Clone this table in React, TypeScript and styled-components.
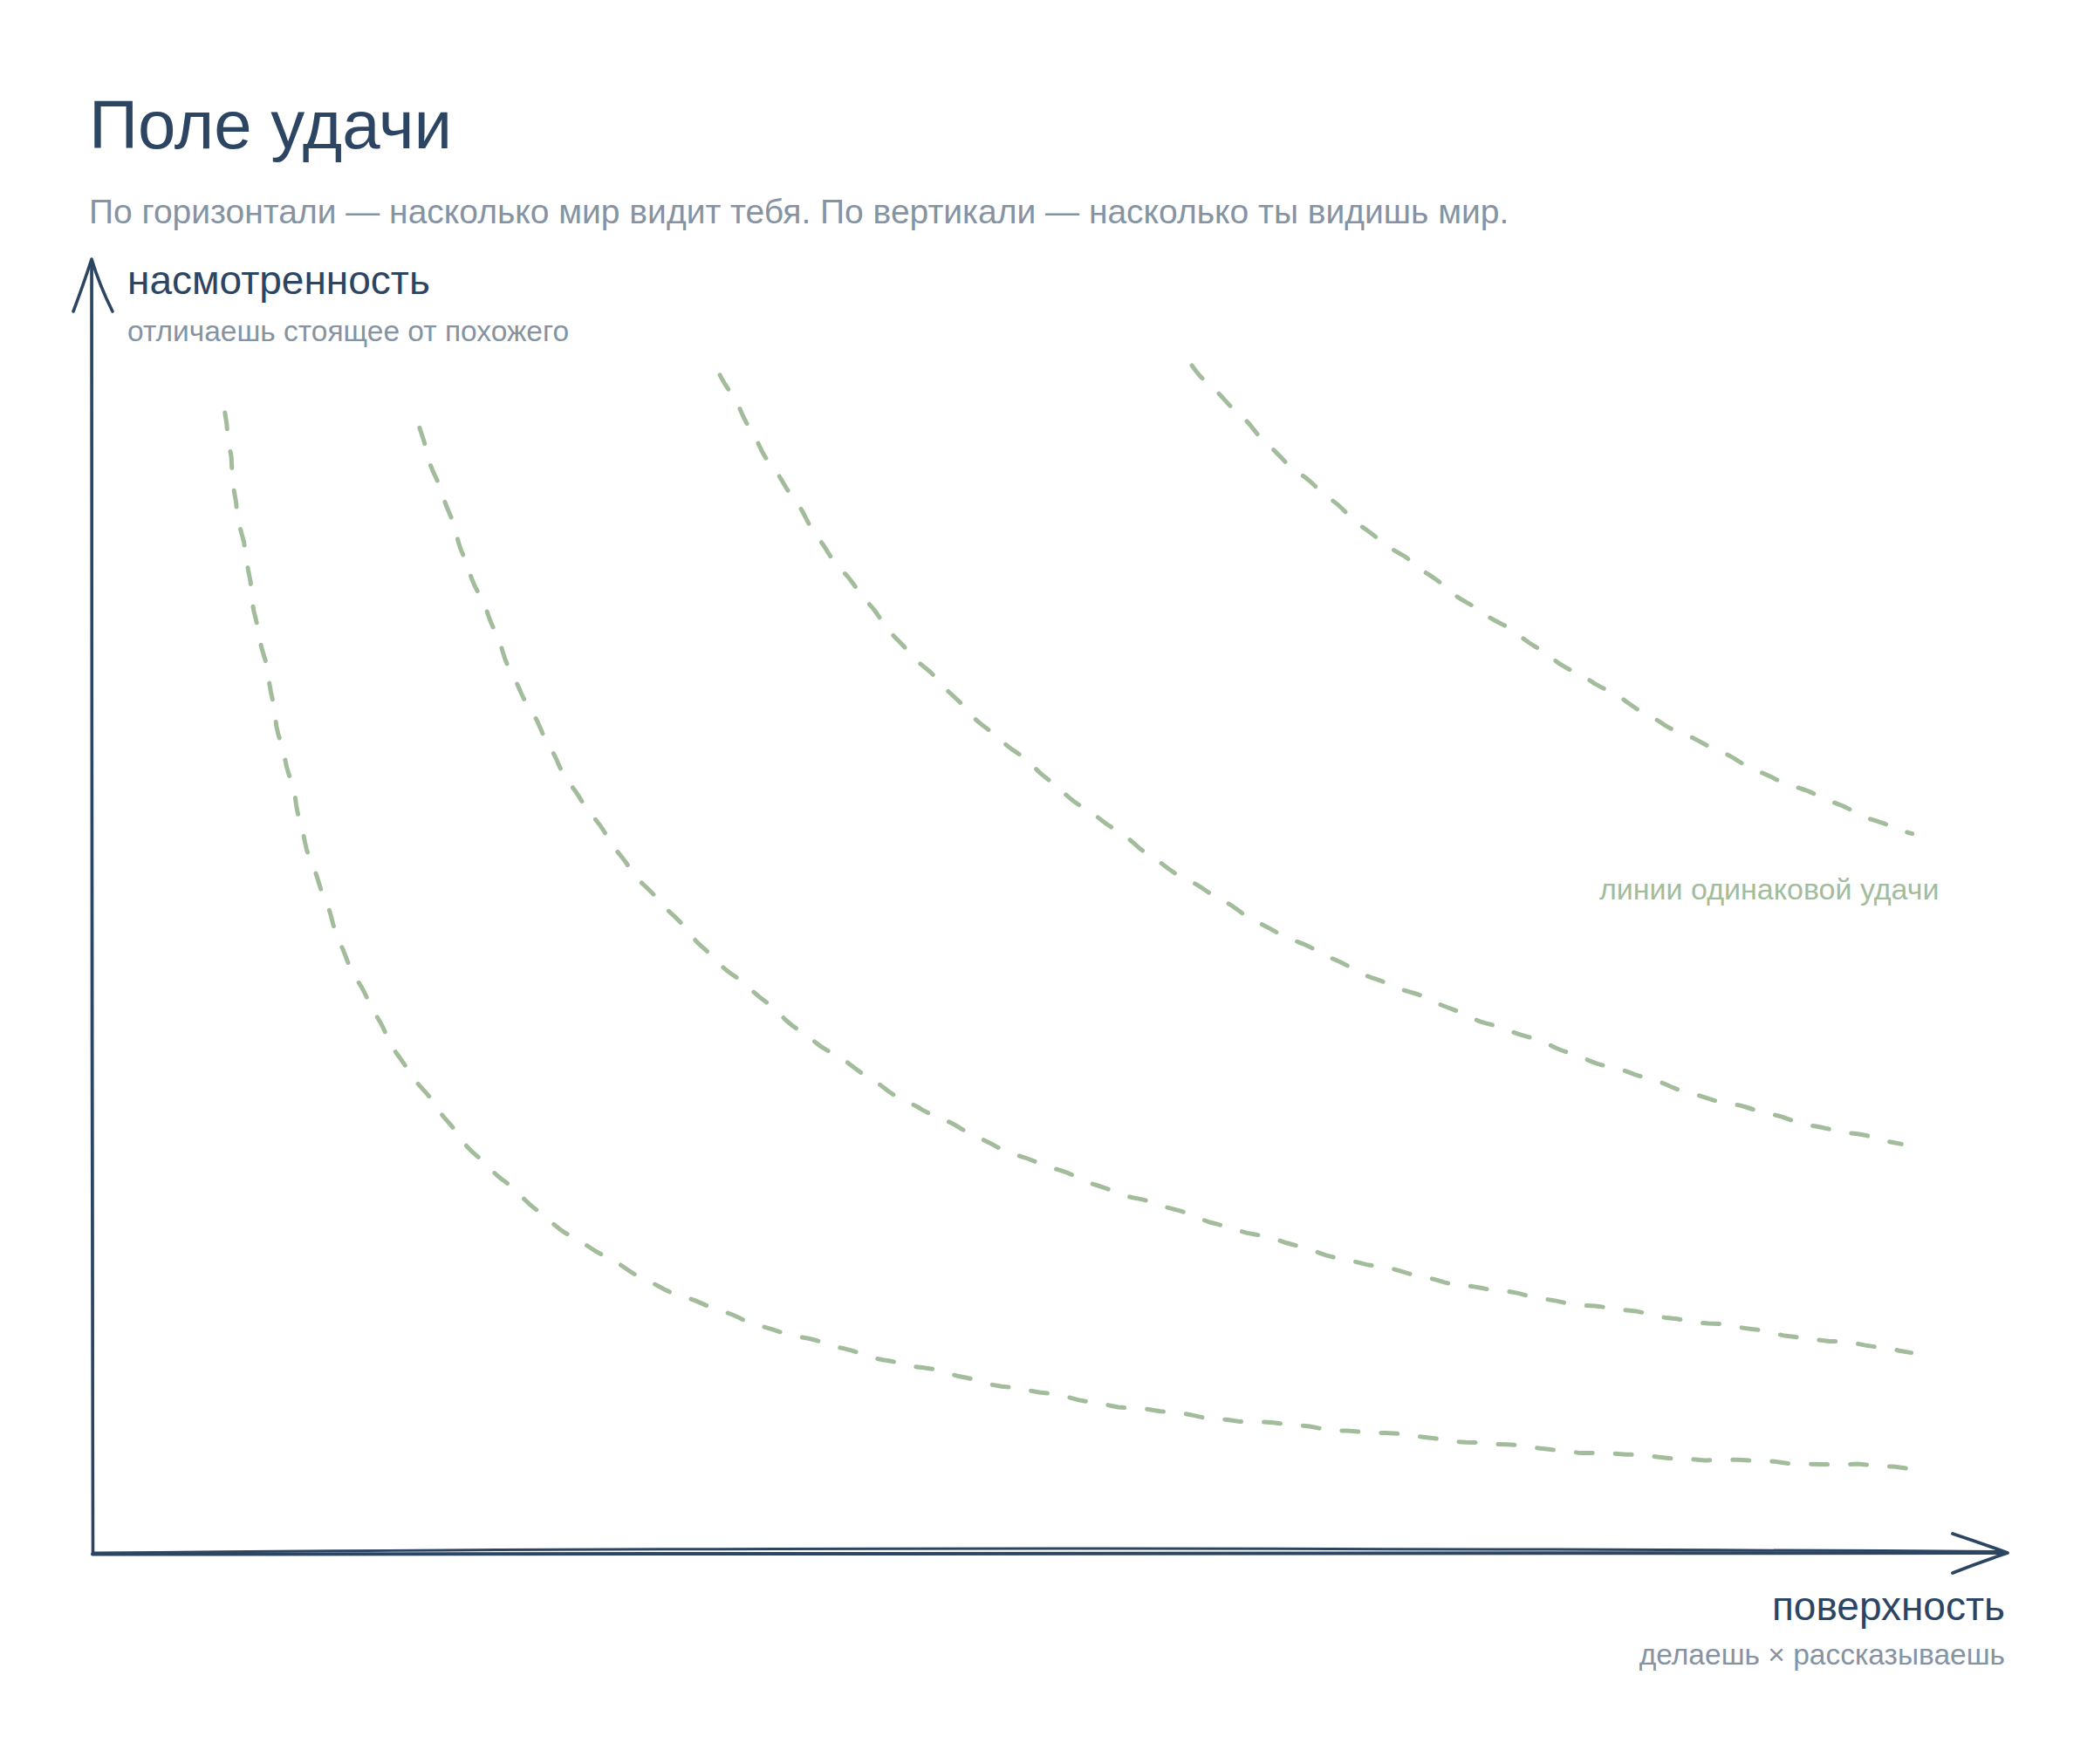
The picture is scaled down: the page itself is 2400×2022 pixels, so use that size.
import React from "react";
import styled, { createGlobalStyle } from "styled-components";

const GlobalStyle = createGlobalStyle`
  html, body { margin: 0; padding: 0; background: #ffffff; }
  body { font-family: "Liberation Sans", Arial, sans-serif; }
`;

const NAVY = "#2c4563";
const GRAY = "#8593a2";
const GREEN = "#a2bc9c";

const Page = styled.div`
  width: 2400px;
  height: 2022px;
  background: #ffffff;
  display: flex;
  flex-direction: column;
  box-sizing: border-box;
  padding-top: 104px;
`;

const Header = styled.header`
  display: flex;
  flex-direction: column;
  padding-left: 102px;
  gap: 41px;
`;

const Title = styled.h1`
  margin: 0;
  font-size: 78px;
  line-height: 1;
  font-weight: 400;
  color: ${NAVY};
`;

const Subtitle = styled.p`
  margin: 0;
  font-size: 39px;
  line-height: 1;
  color: ${GRAY};
`;

const Chart = styled.section`
  position: relative;
  margin-top: 28px;
  display: grid;
  grid-template-columns: 1fr;
`;

const Canvas = styled.svg`
  grid-area: 1 / 1;
  display: block;
  width: 2400px;
  height: 1520px;
`;

const AxisLabel = styled.div<{ $align: "start" | "end" }>`
  display: flex;
  flex-direction: column;
  align-items: ${(p) => (p.$align === "end" ? "flex-end" : "flex-start")};
  gap: 19px;
`;

const YLabel = styled(AxisLabel)`
  grid-area: 1 / 1;
  align-self: start;
  justify-self: start;
  margin-top: 8px;
  margin-left: 146px;
`;

const XLabel = styled(AxisLabel)`
  padding-right: 102px;
  margin-top: 8px;
  gap: 16px;
`;

const AxisName = styled.span`
  font-size: 46px;
  line-height: 1;
  color: ${NAVY};
`;

const AxisHint = styled.span`
  font-size: 33.5px;
  line-height: 1;
  color: ${GRAY};
`;

const CurveNote = styled.span`
  position: absolute;
  left: 1833px;
  top: 712px;
  font-size: 34px;
  line-height: 1;
  color: ${GREEN};
`;

const OX = 106;
const OY = 1780;

type CurveSpec = { k: number; x0: number; x1: number; seed: number };

const curves: CurveSpec[] = [
  { k: 200000, x0: 259, x1: 2191, seed: 1.3 },
  { k: 485000, x0: 482, x1: 2191, seed: 2.7 },
  { k: 969000, x0: 824, x1: 2179, seed: 4.1 },
  { k: 1715000, x0: 1366, x1: 2191, seed: 5.9 },
];

function curvePath(c: CurveSpec): string {
  const n = 260;
  const pts: [number, number][] = [];
  const a = c.x0 - OX;
  const b = c.x1 - OX;
  for (let i = 0; i <= n; i++) {
    const t = i / n;
    const u = a * Math.pow(b / a, t);
    pts.push([OX + u, OY - c.k / u]);
  }
  let s = 0;
  const out: string[] = [];
  for (let i = 0; i < pts.length; i++) {
    const [x, y] = pts[i];
    const p = pts[Math.max(0, i - 1)];
    const q = pts[Math.min(pts.length - 1, i + 1)];
    const dx = q[0] - p[0];
    const dy = q[1] - p[1];
    const len = Math.hypot(dx, dy) || 1;
    const nx = -dy / len;
    const ny = dx / len;
    if (i > 0) s += Math.hypot(x - pts[i - 1][0], y - pts[i - 1][1]);
    const off =
      1.6 * Math.sin(s * 0.011 + c.seed) +
      1.1 * Math.sin(s * 0.047 + c.seed * 2.3) +
      0.6 * Math.sin(s * 0.13 + c.seed * 3.1);
    const px = x + nx * off;
    const py = y + ny * off;
    out.push(`${i === 0 ? "M" : "L"}${px.toFixed(1)} ${py.toFixed(1)}`);
  }
  return out.join(" ");
}

const curvePaths = curves.map(curvePath);

export default function App() {
  return (
    <>
      <GlobalStyle />
      <Page>
        <Header>
          <Title>Поле удачи</Title>
          <Subtitle>
            По горизонтали — насколько мир видит тебя. По вертикали — насколько ты видишь мир.
          </Subtitle>
        </Header>
        <Chart>
          <Canvas viewBox="0 290 2400 1520" xmlns="http://www.w3.org/2000/svg">
            <g fill="none" stroke={GREEN} strokeWidth={5} strokeLinecap="round" strokeDasharray="19 26">
              {curvePaths.map((d, i) => (
                <path key={i} d={d} />
              ))}
            </g>
            <g fill="none" stroke={NAVY} strokeLinecap="round" strokeLinejoin="round">
              <path d="M106.5 1781 L105.5 1200 L105 298" strokeWidth={3.6} />
              <path d="M107 1779 Q106.2 1000 105.6 300" strokeWidth={1.8} />
              <path d="M84 357 Q96 325 105 297 Q114 327 129 357" strokeWidth={3.6} />
              <path d="M106 1781.5 Q1200 1780 2300 1780" strokeWidth={4} />
              <path d="M108 1780 Q1000 1771 2296 1778.5" strokeWidth={3} />
              <path d="M2238 1758 Q2271 1769 2301 1780 Q2268 1791 2238 1803" strokeWidth={3.8} />
            </g>
          </Canvas>
          <YLabel $align="start">
            <AxisName>насмотренность</AxisName>
            <AxisHint>отличаешь стоящее от похожего</AxisHint>
          </YLabel>
          <CurveNote>линии одинаковой удачи</CurveNote>
        </Chart>
        <XLabel $align="end">
          <AxisName>поверхность</AxisName>
          <AxisHint>делаешь × рассказываешь</AxisHint>
        </XLabel>
      </Page>
    </>
  );
}
